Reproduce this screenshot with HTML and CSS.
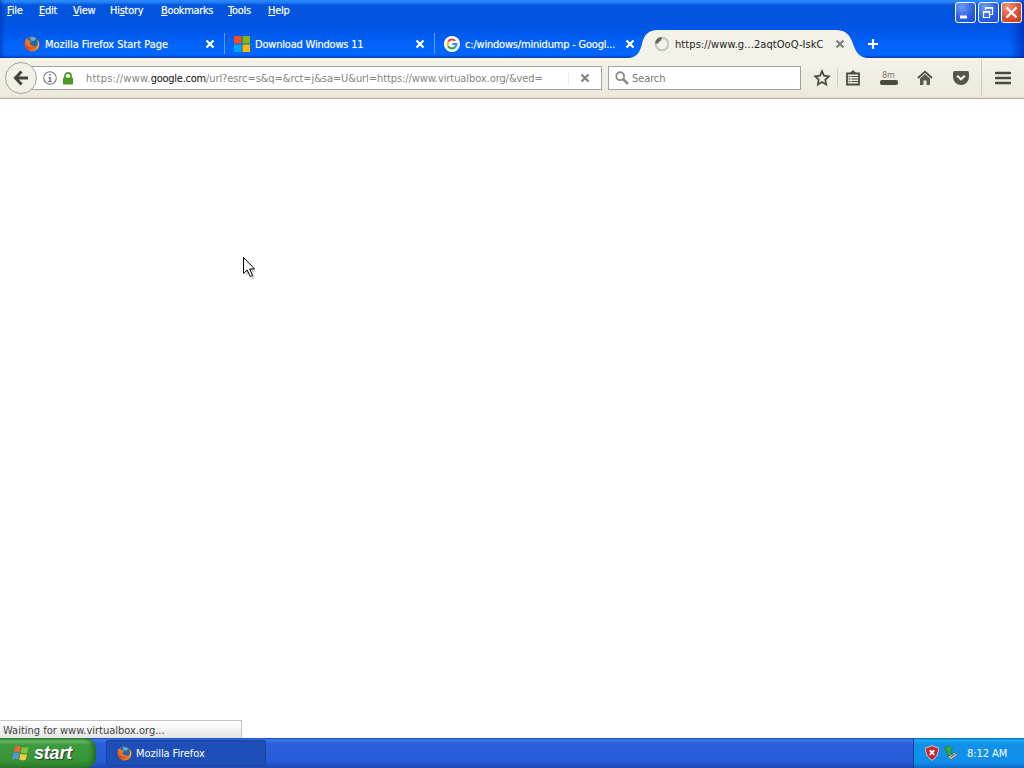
FILE: index.html
```html
<!DOCTYPE html>
<html lang="en">
<head>
  <meta charset="UTF-8">
  <title>Mozilla Firefox</title>
  <link rel="stylesheet" href="styles.css">
</head>
<body>
  <!-- shared icons -->
  <svg class="defs" width="0" height="0">
    <defs>
      <linearGradient id="fox" x1="0" y1="0" x2="1" y2="1">
        <stop offset="0" stop-color="#f08a25"/>
        <stop offset="0.5" stop-color="#d9421c"/>
        <stop offset="1" stop-color="#f5a52b"/>
      </linearGradient>
      <symbol id="firefox" viewBox="0 0 16 16">
        <circle cx="8" cy="8" r="7.4" fill="url(#fox)"/>
        <path d="M3.5 2.8C6 .2 11 .2 13.4 3.4 15 6 14.2 9 12 10.2 9.6 11.2 7.4 10.2 6.6 8.6L4.2 7.2z" fill="#2467a8"/>
        <path d="M6 1.8C8.2.8 10.6 1.4 12 2.8L10 5 7 4.2z" fill="#58b4dc"/>
        <path d="M1.2 3.6 2.6 2.6 4.6 4.4 7.4 4.8 6.8 6.6 5.4 7.4C6.2 9.6 8.8 10 10.4 9.2 8.8 11.8 5 11.8 3.2 9.4z" fill="#ef7424"/>
        <path d="M13.2 3.4C16 6.4 15.6 11 12.6 13.4 14 10 14 6.8 13.2 3.4z" fill="#f9b23a"/>
      </symbol>
      <symbol id="close" viewBox="0 0 10 10">
        <path d="M1.5 1.5 8.5 8.5M8.5 1.5 1.5 8.5" stroke="currentColor" stroke-width="2.2"/>
      </symbol>
    </defs>
  </svg>

  <div class="titlebar">
    <div class="menubar">
      <span class="menu file"><u>F</u>ile</span>
      <span class="menu edit"><u>E</u>dit</span>
      <span class="menu view"><u>V</u>iew</span>
      <span class="menu history">Hi<u>s</u>tory</span>
      <span class="menu bookmarks"><u>B</u>ookmarks</span>
      <span class="menu tools"><u>T</u>ools</span>
      <span class="menu help"><u>H</u>elp</span>
      <div class="window-buttons">
        <div class="wbtn"><svg width="19" height="19" viewBox="0 0 19 19"><path d="M4 12.5h7v3H4z" fill="#fff"/></svg></div>
        <div class="wbtn"><svg width="19" height="19" viewBox="0 0 19 19" fill="none" stroke="#fff"><path d="M6.5 7V4.5h7v7H11" stroke-width="1.2"/><path d="M6.5 5h7" stroke-width="1.6"/><path d="M4.5 8.5h6v6h-6z" stroke-width="1.2"/><path d="M4.5 9h6" stroke-width="1.6"/></svg></div>
        <div class="wbtn red"><svg width="19" height="19" viewBox="0 0 19 19"><path d="M4.5 4.5l10 10M14.5 4.5l-10 10" stroke="#fff" stroke-width="2.2"/></svg></div>
      </div>
    </div>

    <div class="tabs">
      <div class="tab">
        <svg class="favicon" width="16" height="16"><use href="#firefox"/></svg>
        <span class="label">Mozilla Firefox Start Page</span>
        <svg class="close" width="10" height="10"><use href="#close"/></svg>
      </div>
      <div class="tab sep">
        <svg class="favicon" width="16" height="16" viewBox="0 0 16 16">
          <path d="M0 0h7.5v7.5H0z" fill="#f25022"/><path d="M8.5 0H16v7.5H8.5z" fill="#7fba00"/>
          <path d="M0 8.5h7.5V16H0z" fill="#00a4ef"/><path d="M8.5 8.5H16V16H8.5z" fill="#ffb900"/>
        </svg>
        <span class="label win11">Download Windows 11</span>
        <svg class="close" width="10" height="10"><use href="#close"/></svg>
      </div>
      <div class="tab sep">
        <svg class="favicon" width="16" height="16" viewBox="0 0 16 16" fill="none" stroke-width="2.1">
          <circle cx="8" cy="8" r="8" fill="#fff"/>
          <path d="M11.3 4.9A4.5 4.5 0 0 0 4.1 5.8" stroke="#ea4335"/>
          <path d="M4.1 5.8A4.5 4.5 0 0 0 4.1 10.2" stroke="#fbbc05"/>
          <path d="M4.1 10.2A4.5 4.5 0 0 0 10.9 11.4" stroke="#34a853"/>
          <path d="M10.9 11.4A4.5 4.5 0 0 0 12.5 8H8.2" stroke="#4285f4"/>
        </svg>
        <span class="label dump">c:/windows/minidump - Googl...</span>
        <svg class="close" width="10" height="10"><use href="#close"/></svg>
      </div>
      <div class="tab active">
        <svg class="tab-shape" width="240" height="28" viewBox="0 0 240 28">
          <path d="M0 28C8 27 11 22 13 14 15 5 19 0 29 0H207C217 0 221 5 224 14 227 22 230 27 238 28z" fill="#f3f2e8"/>
        </svg>
        <svg class="favicon" width="16" height="16" viewBox="0 0 16 16">
          <circle cx="8" cy="8" r="6.3" fill="none" stroke="#c5c5c0" stroke-width="2"/>
          <path d="M1 7.6A7 7 0 0 1 7.6 1V4.2A4.5 4.5 0 0 0 4.2 7.6z" fill="#66665f"/>
        </svg>
        <span class="label site">https://www.g...2aqtOoQ-IskC</span>
        <svg class="close" width="10" height="10"><use href="#close"/></svg>
      </div>
      <svg class="new-tab" width="12" height="12" viewBox="0 0 12 12"><path d="M6 1v10M1 6h10" stroke="#fff" stroke-width="2.2"/></svg>
    </div>
  </div>

  <div class="toolbar">
    <div class="urlbar">
      <div class="back"><svg width="18" height="18" viewBox="0 0 18 18" fill="none" stroke="#44443c" stroke-width="3"><path d="M9.5 2.5 3.5 9 9.5 15.5M3.5 9H16"/></svg></div>
      <svg class="info" width="14" height="14" viewBox="0 0 14 14"><circle cx="7" cy="7" r="6.3" fill="none" stroke="#777" stroke-width="1.1"/><path d="M6.2 3h1.600v1.600H6.200zM5.500 6h2.300v4h1v1H5.300v-1h1V7h-.8z" fill="#777"/></svg>
      <svg class="lock" width="10" height="13" viewBox="0 0 10 13"><path d="M2 6V4a3 3 0 0 1 6 0v2" fill="none" stroke="#4b9a24" stroke-width="1.8"/><rect y="5.5" width="10" height="7" rx=".8" fill="#4b9a24"/></svg>
      <span class="url"><span class="scheme">https://www.</span><span class="host">google.com</span><span class="path">/url?esrc=s&amp;q=&amp;rct=j&amp;sa=U&amp;url=https://www.virtualbox.org/&amp;ved=</span></span>
      <div class="stop"><svg width="10" height="10"><use href="#close"/></svg></div>
    </div>
    <div class="search">
      <svg width="14" height="14" viewBox="0 0 14 14" fill="none" stroke="#8c8c88"><circle cx="5.2" cy="5.2" r="3.9" stroke-width="1.9"/><path d="M8 8l5 5" stroke-width="2.5"/></svg>
      <span>Search</span>
    </div>
    <div class="tools-right">
      <svg width="18" height="18" viewBox="0 0 18 18"><path d="M9 2.200l2 4.500 4.900.6-3.600 3.300.9 4.900L9 13.100l-4.200 2.400.9-4.900L2.100 7.300 7 6.700z" fill="none" stroke="#4a4a42" stroke-width="1.7"/></svg>
      <div class="divider short"></div>
      <svg width="16" height="18" viewBox="0 0 16 18"><path d="M2 4.500h12v11H2z" fill="none" stroke="#4a4a42" stroke-width="1.8"/><path d="M4.500 4.500 8 1l3.500 3.500z" fill="#4a4a42"/><path d="M3.500 7.500h2M6.500 7.500h6.500M3.500 10h2M6.500 10h6.500M3.500 12.500h2M6.500 12.500h6.500" stroke="#4a4a42" stroke-width="1.2"/></svg>
      <div class="memory"><span>8m</span><i></i></div>
      <svg class="home" width="16" height="18" viewBox="0 0 16 18"><path d="M1 9 8 2.700 15 9" fill="none" stroke="#4a4a42" stroke-width="1.7"/><path d="M3 9.500 8 5l5 4.500V16H9.500v-4.500h-3V16H3z" fill="#5a5a52"/></svg>
      <svg class="pocket" width="16" height="16" viewBox="0 0 16 16"><path d="M2 1h12q2 0 2 2v4a8 8 0 0 1-16 0V3q0-2 2-2z" fill="#56564e"/><path d="M4.200 5.700 8 9.300l3.800-3.600" fill="none" stroke="#f3f2e8" stroke-width="2.2"/></svg>
      <div class="divider tall"></div>
      <svg width="16" height="14" viewBox="0 0 16 14"><path d="M1 2h14M1 7h14M1 12h14" stroke="#4a4a42" stroke-width="2.7" stroke-linecap="round"/></svg>
    </div>
  </div>

  <div class="page">
    <svg class="cursor" width="18" height="24" viewBox="0 0 18 24">
      <path d="M4 4v16l3-3 3 6 3-1-3-6h4z" fill="#000" opacity=".18"/>
      <path d="M1.500 1.500v16l3.700-3.500 3 6.500 2.400-1.100-3-6.400h5z" fill="#fff" stroke="#000"/>
    </svg>
    <div class="status"><span>Waiting for www.virtualbox.org...</span></div>
  </div>

  <div class="taskbar">
    <div class="start">
      <svg width="19" height="18" viewBox="0 0 17 18">
        <path d="M3 2.500Q6 .8 9 2.500L7.700 8.300Q5 6.800 1.800 8.300z" fill="#ee6337"/>
        <path d="M10 3Q13 4.500 16.500 3L15.200 8.900Q12 10 8.800 8.600z" fill="#86c440"/>
        <path d="M1.500 9.400Q4.500 8 7.500 9.400L6.200 15.200Q3.500 13.800.2 15.200z" fill="#5b8ff0"/>
        <path d="M8.500 9.800Q11.500 11.300 15 10L13.700 15.800Q10.500 17 7.200 15.600z" fill="#f8cb36"/>
      </svg>
      <span>start</span>
    </div>
    <div class="task">
      <svg width="15" height="15"><use href="#firefox"/></svg>
      <span>Mozilla Firefox</span>
    </div>
    <div class="tray">
      <svg width="14" height="16" viewBox="0 0 14 16"><path d="M7 .6Q10 2.600 13.400 2.500 14 11 7 15.400 0 11 .6 2.500 4 2.600 7 .6z" fill="#c9242b" stroke="#d3c3cf"/><path d="M4.700 5.200l4.600 4.600M9.300 5.200 4.700 9.800" stroke="#fff" stroke-width="1.8"/></svg>
      <svg class="eject" width="14" height="16" viewBox="0 0 14 16"><path d="M4 11.500 10.500 7.500 13.500 10 7 14.800z" fill="#c3cbd2" stroke="#56636d" stroke-width=".8"/><path d="M6.500 12.300 11 9.300" stroke="#43515c"/><path d="M1 2 6 1l3 3-2 1v3l2 1-5 2-2-5-1-1z" fill="#35a643" stroke="#187329" stroke-width=".6"/></svg>
      <span>8:12 AM</span>
    </div>
  </div>
</body>
</html>
```
FILE: styles.css
```css
* {
  box-sizing: border-box;
}
body {
  margin: 0;
  width: 1024px;
  height: 768px;
  overflow: hidden;
  display: flex;
  flex-direction: column;
  background: #fff;
  font-family: Tahoma, "DejaVu Sans Condensed", "DejaVu Sans", sans-serif;
  font-stretch: condensed;
  font-size: 11px;
  line-height: 14px;
  letter-spacing: -0.25px;
  white-space: nowrap;
}
svg {
  display: block;
  flex: none;
}
.defs {
  position: absolute;
}

/* title bar */
.titlebar {
  height: 58px;
  flex: none;
  color: #fff;
  background: linear-gradient(90deg, rgba(0,40,170,.5), transparent 5px, transparent 1010px, rgba(0,30,160,.6)),
    linear-gradient(#2a8bfb 0, #2382f8 2px, #0355dc 5px, #0054e0 20px, #0058ea 32px, #0265fc 46px, #0265fc 55px, #0048c8 57px, #0b3fa5 58px);
}
.menubar {
  display: flex;
  height: 30px;
  padding: 2px 2px 0 7px;
}
.menu {
  padding-top: 2px;
  text-shadow: 0 0 1px rgba(255,255,255,.5);
}
.file { width: 32px; }
.edit { width: 34px; }
.view { width: 37px; }
.history { width: 51px; }
.bookmarks {
  width: 67px;
  letter-spacing: -0.35px;
}
.tools { width: 40px; }
.window-buttons {
  display: flex;
  gap: 2px;
  margin-left: auto;
}
.wbtn {
  width: 21px;
  height: 21px;
  border: 1px solid #fff;
  border-radius: 3px;
  background: radial-gradient(circle at 30% 20%, #6f9cf5, #2c62e4 55%, #1c4cd0);
}
.red {
  background: radial-gradient(circle at 30% 20%, #f0977c, #de5030 55%, #c23a16);
}
.tabs {
  display: flex;
  height: 28px;
  padding-left: 15px;
}
.tab {
  display: flex;
  align-items: center;
  width: 210px;
  padding: 0 10px 0 9px;
  position: relative;
  text-shadow: 0 0 1px rgba(255,255,255,.5);
}
.sep::before {
  content: "";
  position: absolute;
  left: -1px;
  top: 3px;
  width: 1px;
  height: 21px;
  background: #5b9dfc;
}
.label {
  margin-left: 5px;
  padding-top: 1px;
  letter-spacing: -0.05px;
}
.win11, .dump {
  letter-spacing: -0.2px;
}
.site {
  letter-spacing: 0.08px;
}
.close {
  margin-left: auto;
}
.active {
  color: #222;
  text-shadow: none;
}
.active .close {
  color: #80807a;
}
.tab-shape {
  position: absolute;
  left: -16px;
  top: 0;
}
.active .favicon, .active .label, .active .close {
  position: relative;
}
.new-tab {
  margin: 8px 0 0 12px;
}

/* toolbar */
.toolbar {
  display: flex;
  align-items: center;
  height: 41px;
  flex: none;
  padding-left: 5px;
  border-bottom: 1px solid #aaa89b;
  background: linear-gradient(#f4f3ea, #ece9dc);
}
.urlbar {
  display: flex;
  align-items: center;
  width: 597px;
  height: 24px;
  position: relative;
  color: #85857f;
}
.urlbar::before {
  content: "";
  position: absolute;
  left: 20px;
  right: 0;
  top: 0;
  bottom: 0;
  background: #fff;
  border: 1px solid #a5a396;
}
.urlbar > * {
  position: relative;
}
.back {
  width: 32px;
  height: 32px;
  padding: 6px;
  border: 1px solid #a5a396;
  border-radius: 50%;
  background: #f3f1e7;
}
.info {
  margin-left: 6px;
}
.lock {
  margin-left: 6px;
}
.url {
  margin-left: 13px;
  padding-top: 2px;
}
.scheme {
  letter-spacing: 0.23px;
}
.host {
  color: #111;
}
.path {
  letter-spacing: -0.08px;
}
.stop {
  margin-left: auto;
  display: flex;
  align-items: center;
  height: 14px;
  width: 34px;
  padding-left: 11px;
  border-left: 1px solid #eee;
}
.search {
  display: flex;
  align-items: center;
  width: 193px;
  height: 24px;
  margin-left: 6px;
  padding-left: 6px;
  gap: 3px;
  border: 1px solid #a5a396;
  background: #fff;
  color: #777;
}
.search span {
  padding-top: 2px;
  letter-spacing: -0.1px;
}
.tools-right {
  display: flex;
  align-items: center;
  margin-left: 12px;
}
.divider {
  width: 1px;
  background: #cfccc0;
}
.short {
  height: 18px;
  margin: 0 7px 0 6px;
}
.tall {
  height: 38px;
  margin: 0 13px 0 12px;
}
.memory {
  width: 18px;
  height: 16px;
  margin-left: 19px;
  font-size: 9px;
  line-height: 10px;
  color: #77776f;
}
.memory span {
  display: block;
  padding-left: 2px;
}
.memory i {
  display: block;
  height: 5px;
  border-radius: 2px;
  background: #4a4a42;
}
.home {
  margin-left: 19px;
}
.pocket {
  margin-left: 20px;
}

/* page */
.page {
  flex: 1;
  display: flex;
  align-items: flex-end;
  position: relative;
}
.cursor {
  position: absolute;
  left: 242px;
  top: 157px;
}
.status {
  width: 242px;
  height: 18px;
  padding: 3px 0 0 3px;
  border: 1px solid #c4c4c4;
  border-width: 1px 1px 0 0;
  background: linear-gradient(#fff, #e4e4e4);
  color: #444;
  letter-spacing: 0;
}

/* taskbar */
.taskbar {
  display: flex;
  height: 30px;
  flex: none;
  color: #fff;
  background: linear-gradient(#1c48b5, #3a7be8 2px, #2a60da 5px, #255bd8 24px, #1d48b0);
}
.start {
  display: flex;
  align-items: center;
  width: 96px;
  padding-left: 11px;
  gap: 4px;
  border-radius: 0 10px 10px 0;
  background: linear-gradient(#2c7a2c, #64b564 3px, #3d9a3d 7px, #379537 22px, #2a792a);
  box-shadow: inset -5px 0 5px -2px #226b22;
  font: italic bold 18px/22px "Liberation Sans", Arial, sans-serif;
  letter-spacing: -0.2px;
  text-shadow: 1px 1px 1px #333;
}
.start span {
  padding-bottom: 1px;
}
.task {
  display: flex;
  align-items: center;
  width: 160px;
  height: 26px;
  margin: 2px 0 0 10px;
  padding-left: 10px;
  gap: 4px;
  border: 1px solid #1a42a3;
  border-radius: 2px;
  background: #1e4fb8;
}
.task span {
  padding-top: 2px;
  letter-spacing: -0.08px;
}
.tray {
  display: flex;
  align-items: center;
  width: 111px;
  margin-left: auto;
  padding-left: 11px;
  border-left: 1px solid #0d3c92;
  background: linear-gradient(#0c59b9, #19b0f5 2px, #1391e9 6px, #0f8eea 24px, #0d68c8);
}
.eject {
  margin-left: 5px;
}
.tray span {
  margin-left: 9px;
  padding-top: 1px;
  letter-spacing: -0.05px;
}
```
